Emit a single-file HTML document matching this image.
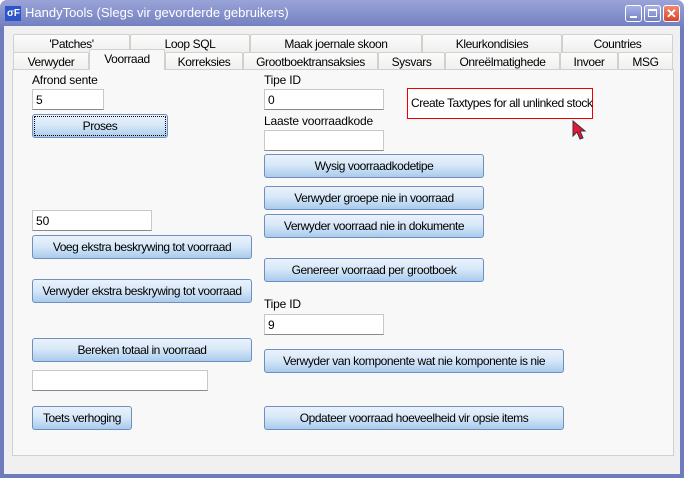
<!DOCTYPE html>
<html><head><meta charset="utf-8"><style>
*{box-sizing:border-box;margin:0;padding:0}
body{width:684px;height:478px;overflow:hidden;background:#fff;font-family:"Liberation Sans",sans-serif;font-size:11px;color:#000;position:relative}
.win{position:absolute;left:0;top:0;width:684px;height:478px;background:linear-gradient(#9aa4d8,#6e7bbd 30px);border-radius:7px 7px 0 0}
.title{position:absolute;left:25px;top:5px;color:#fff;font-size:13px}
.icon{position:absolute;left:5px;top:6px;width:16px;height:15px;background:#2d55c8;color:#fff;font-size:10px;font-weight:bold;line-height:15px;text-align:right;padding-right:1px}
.wb{position:absolute;top:5px;width:17px;height:17px;border:1px solid #fff;border-radius:3px;background:linear-gradient(#a8b2e6,#7380c4)}
.client{position:absolute;left:4px;top:26px;width:676px;height:448px;background:#f0f0f0}
.panel{position:absolute;left:12px;top:69px;width:662px;height:387px;background:#f8f8f8;border:1px solid #d0d0ce}
.tab{position:absolute;height:18px;border:1px solid #d0d0ce;border-bottom:none;background:linear-gradient(#fcfcfc,#efefee);text-align:center;line-height:18px;font-size:12px;letter-spacing:-0.4px;border-radius:2px 2px 0 0}
.sel{background:#f8f8f8;height:21px;z-index:2}
.lbl{position:absolute;font-size:12px;letter-spacing:-0.2px}
.inp{position:absolute;height:21px;background:#fff;border:1px solid #c8c8c8;border-bottom-color:#888;padding:3px 3px;font-size:12px}
.btn{position:absolute;height:24px;border:1px solid #6f8fc0;border-radius:3px;background:linear-gradient(#eaf2fb 0%,#d8e8f8 45%,#a9cbed 100%);text-align:center;line-height:23px;font-size:12px;letter-spacing:-0.45px;white-space:nowrap}
</style></head><body>
<div class="win">
<div class="icon">σF</div>
<div class="title">HandyTools (Slegs vir gevorderde gebruikers)</div>
<div class="wb" style="left:625px"><div style="position:absolute;left:4px;top:10px;width:7px;height:2px;background:#fff"></div></div>
<div class="wb" style="left:644px"><div style="position:absolute;left:3px;top:3px;width:9px;height:8px;border:1px solid #fff;border-top-width:2px"></div></div>
<div class="wb" style="left:663px;background:linear-gradient(#f08a6e,#d8452a);color:#fff;font-weight:bold;font-size:13px;text-align:center;line-height:15px">✕</div>
<div class="client">
</div>
<div class="tab" style="left:13px;top:34px;width:117px">'Patches'</div>
<div class="tab" style="left:130px;top:34px;width:120px">Loop SQL</div>
<div class="tab" style="left:250px;top:34px;width:172px">Maak joernale skoon</div>
<div class="tab" style="left:422px;top:34px;width:140px">Kleurkondisies</div>
<div class="tab" style="left:562px;top:34px;width:111px">Countries</div>
<div class="tab" style="left:13px;top:52px;width:76px">Verwyder</div>
<div class="tab sel" style="left:89px;top:49px;width:76px">Voorraad</div>
<div class="tab" style="left:165px;top:52px;width:78px">Korreksies</div>
<div class="tab" style="left:243px;top:52px;width:135px">Grootboektransaksies</div>
<div class="tab" style="left:378px;top:52px;width:67px">Sysvars</div>
<div class="tab" style="left:445px;top:52px;width:115px">Onreëlmatighede</div>
<div class="tab" style="left:560px;top:52px;width:58px">Invoer</div>
<div class="tab" style="left:618px;top:52px;width:55px">MSG</div>
<div class="panel"></div>

<div class="lbl" style="left:32px;top:73px">Afrond sente</div>
<div class="inp" style="left:32px;top:89px;width:72px">5</div>
<div class="btn" style="left:32px;top:114px;width:136px;outline:1px dotted #000;outline-offset:-3px">Proses</div>

<div class="lbl" style="left:264px;top:73px">Tipe ID</div>
<div class="inp" style="left:264px;top:89px;width:120px">0</div>
<div class="lbl" style="left:264px;top:114px">Laaste voorraadkode</div>
<div class="inp" style="left:264px;top:130px;width:120px"></div>

<div style="position:absolute;left:407px;top:88px;width:186px;height:31px;border:1px solid #e00;background:#fff;font-size:12px;letter-spacing:-0.45px;line-height:29px;padding-left:3px;white-space:nowrap">Create Taxtypes for all unlinked stock</div>
<svg style="position:absolute;left:572px;top:120px" width="16" height="22" viewBox="0 0 16 22"><path d="M1 1 L1 16 L5 12 L8 19 L11 18 L8 11 L13 11 Z" fill="#e8173a" stroke="#333" stroke-width="1"/></svg>

<div class="btn" style="left:264px;top:154px;width:220px">Wysig voorraadkodetipe</div>
<div class="btn" style="left:264px;top:186px;width:220px">Verwyder groepe nie in voorraad</div>
<div class="btn" style="left:264px;top:214px;width:220px">Verwyder voorraad nie in dokumente</div>
<div class="btn" style="left:264px;top:258px;width:220px">Genereer voorraad per grootboek</div>
<div class="lbl" style="left:264px;top:297px">Tipe ID</div>
<div class="inp" style="left:264px;top:314px;width:120px">9</div>
<div class="btn" style="left:264px;top:349px;width:300px">Verwyder van komponente wat nie komponente is nie</div>
<div class="btn" style="left:264px;top:406px;width:300px">Opdateer voorraad hoeveelheid vir opsie items</div>

<div class="inp" style="left:32px;top:210px;width:120px">50</div>
<div class="btn" style="left:32px;top:235px;width:220px">Voeg ekstra beskrywing tot voorraad</div>
<div class="btn" style="left:32px;top:279px;width:220px">Verwyder ekstra beskrywing tot voorraad</div>
<div class="btn" style="left:32px;top:338px;width:220px">Bereken totaal in voorraad</div>
<div class="inp" style="left:32px;top:370px;width:176px"></div>
<div class="btn" style="left:32px;top:406px;width:100px">Toets verhoging</div>
</div>
</body></html>
